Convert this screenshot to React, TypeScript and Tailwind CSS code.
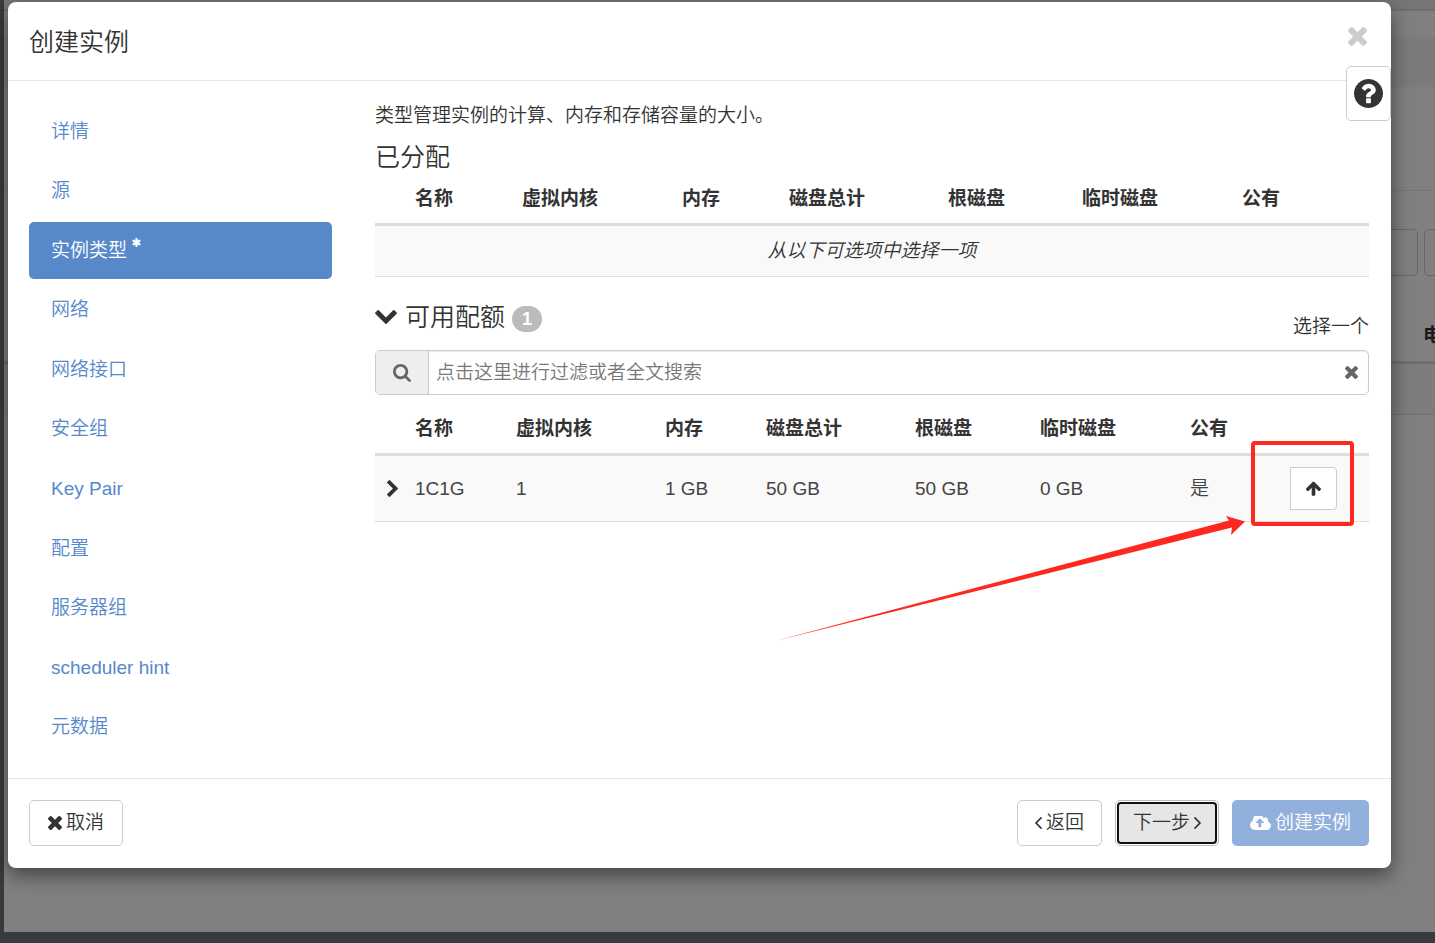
import React from "react";

type IconProps = { className: string };

const icon = (viewBox: string, d: string) =>
  function Icon({ className }: IconProps) {
    return (
      <svg viewBox={viewBox} className={className} fill="currentColor" aria-hidden="true">
        <path d={d} />
      </svg>
    );
  };

const Times = icon(
  "302 366 1188 1188",
  "M1490 1322q0 40-28 68l-136 136q-28 28-68 28t-68-28l-294-294-294 294q-28 28-68 28t-68-28l-136-136q-28-28-28-68t28-68l294-294-294-294q-28-28-28-68t28-68l136-136q28-28 68-28t68 28l294 294 294-294q28-28 68-28t68 28l136 136q28 28 28 68t-28 68l-294 294 294 294q28 28 28 68z",
);
const ChevronDown = icon(
  "90 533 1612 1035",
  "M1683 808l-742 741q-19 19-45 19t-45-19l-742-741q-19-19-19-45.5t19-45.5l166-165q19-19 45-19t45 19l531 531 531-531q19-19 45-19t45 19l166 165q19 19 19 45.5t-19 45.5z",
);
const ChevronRight = icon(
  "346 26 1036 1612",
  "M1363 877l-742 742q-19 19-45 19t-45-19l-166-166q-19-19-19-45t19-45l531-531-531-531q-19-19-19-45t19-45l166-166q19-19 45-19t45 19l742 742q19 19 19 45t-19 45z",
);
const Search = icon(
  "64 128 1664 1664",
  "M1216 832q0-185-131.5-316.5t-316.5-131.5-316.5 131.5-131.5 316.5 131.5 316.5 316.5 131.5 316.5-131.5 131.5-316.5zm512 832q0 52-38 90t-90 38q-54 0-90-38l-343-342q-179 124-399 124-143 0-273.5-55.5t-225-150-150-225-55.5-273.5 55.5-273.5 150-225 225-150 273.5-55.5 273.5 55.5 225 150 150 225 55.5 273.5q0 220-124 399l343 343q37 37 37 90z",
);
const ArrowUp = icon(
  "116 155 1560 1509",
  "M1675 971q0 51-37 90l-75 75q-38 38-91 38-54 0-90-38l-294-293v704q0 52-37.5 84.5t-90.5 32.5h-128q-53 0-90.5-32.5t-37.5-84.5v-704l-294 293q-36 38-90 38t-90-38l-75-75q-38-38-38-90 0-53 38-91l651-651q35-37 90-37 54 0 91 37l651 651q37 39 37 91z",
);
const QuestionCircle = icon(
  "128 128 1536 1536",
  "M1024 1376v-192q0-14-9-23t-23-9h-192q-14 0-23 9t-9 23v192q0 14 9 23t23 9h192q14 0 23-9t9-23zm256-672q0-88-55.5-163t-138.5-116-170-41q-243 0-371 213-15 24 8 42l132 100q7 6 19 6 16 0 25-12 53-68 86-92 34-24 86-24 48 0 85.5 26t37.5 59q0 38-20 61t-68 45q-63 28-115.5 86.5t-52.5 125.5v36q0 14 9 23t23 9h192q14 0 23-9t9-23q0-19 21.5-49.5t54.5-49.5q32-18 49-28.5t46-35 44.5-48 28-60.5 12.5-81zm384 192q0 209-103 385.5t-279.5 279.5-385.5 103-385.5-103-279.5-279.5-103-385.5 103-385.5 279.5-279.5 385.5-103 385.5 103 279.5 279.5 103 385.5z",
);
const CloudUpload = icon(
  "-64 256 1920 1280",
  "M1216 864q0-14-9-23l-352-352q-9-9-23-9t-23 9l-351 351q-10 12-10 24 0 14 9 23t23 9h224v352q0 13 9.5 22.5t22.5 9.5h192q13 0 22.5-9.5t9.5-22.5v-352h224q13 0 22.5-9.5t9.5-22.5zm640 288q0 159-112.5 271.5t-271.5 112.5h-1088q-185 0-316.5-131.5t-131.5-316.5q0-130 70-240t188-165q-2-30-2-43 0-212 150-362t362-150q156 0 285.5 87t188.5 231q71-62 166-62 106 0 181 75t75 181q0 76-41 138 130 31 213.5 135.5t83.5 238.5z",
);
const AngleLeft = icon(
  "621 461 582 998",
  "M1203 544q0 13-10 23l-393 393 393 393q10 10 10 23t-10 23l-50 50q-10 10-23 10t-23-10l-466-466q-10-10-10-23t10-23l466-466q10-10 23-10t23 10l50 50q10 10 10 23z",
);
const AngleRight = icon(
  "589 461 582 998",
  "M1171 960q0 13-10 23l-466 466q-10 10-23 10t-23-10l-50-50q-10-10-10-23t10-23l393-393-393-393q-10-10-10-23t10-23l50-50q10-10 23-10t23 10l466 466q10 10 10 23z",
);
const Asterisk = icon(
  "128 128 1536 1536",
  "M1546 1050q46 26 59.5 77.5t-12.5 97.5l-64 110q-26 46-77.5 59.5t-97.5-12.5l-266-153v307q0 52-38 90t-90 38h-128q-52 0-90-38t-38-90v-307l-266 153q-46 26-97.5 12.5t-77.5-59.5l-64-110q-26-46-12.5-97.5t59.5-77.5l266-154-266-154q-46-26-59.5-77.5t12.5-97.5l64-110q26-46 77.5-59.5t97.5 12.5l266 153v-307q0-52 38-90t90-38h128q52 0 90 38t38 90v307l266-153q46-26 97.5-12.5t77.5 59.5l64 110q26 46 12.5 97.5t-59.5 77.5l-266 154z",
);

const steps = [
  "详情",
  "源",
  "实例类型",
  "网络",
  "网络接口",
  "安全组",
  "Key Pair",
  "配置",
  "服务器组",
  "scheduler hint",
  "元数据",
];
const activeStep = "实例类型";

const headings = ["名称", "虚拟内核", "内存", "磁盘总计", "根磁盘", "临时磁盘", "公有"];
const flavor = ["1C1G", "1", "1 GB", "50 GB", "50 GB", "0 GB", "是"];

function TableHead({ trailing }: { trailing?: boolean }) {
  return (
    <thead>
      <tr className="border-b-3 border-[#ddd]">
        <td />
        {headings.map((h) => (
          <th key={h} scope="col" className="px-[11px] py-[11px] text-left font-bold leading-[27px]">
            {h}
          </th>
        ))}
        {trailing && <td />}
      </tr>
    </thead>
  );
}

function PageBehind() {
  return (
    <div className="absolute inset-0 flex flex-col overflow-hidden bg-[#808080]" aria-hidden="true">
      <div className="h-[11px] shrink-0 border-b-2 border-[#6e6e6e] bg-[#767676]" />
      <div className="h-[26px] shrink-0" />
      <div className="h-[50px] shrink-0 bg-[#7b7b7b]" />
      <div className="h-[104px] shrink-0 border-b border-[#777]" />
      <div className="flex shrink-0 justify-end gap-[6px] pt-[38px]">
        <div className="h-[47px] w-[240px] rounded-[5px] border border-[#666]" />
        <div className="-mr-[40px] h-[47px] w-[51px] rounded-[5px] border border-[#666]" />
      </div>
      <div className="mt-[44px] flex h-[44px] shrink-0 justify-end border-b-3 border-[#6f6f6f]">
        <span className="-mr-[7px] text-[19px] font-bold leading-[32px] text-[#1a1a1a]">电</span>
      </div>
      <div className="h-[51px] shrink-0 border-b border-[#6f6f6f] bg-[#7d7d7d]" />
    </div>
  );
}

export default function App() {
  return (
    <div className="relative flex min-h-screen flex-col border-b-11 border-l-4 border-[#373b3f] bg-[#808080] font-['Liberation_Sans','Noto_Sans_CJK_SC',sans-serif] text-[19px] leading-[26px] text-[#333]">
      <PageBehind />
      <div
        role="dialog"
        aria-labelledby="dialog-title"
        className="relative mt-[2px] mr-[44px] mb-[64px] ml-[4px] flex flex-1 flex-col rounded-[8px] bg-white shadow-[0_7px_20px_rgba(0,0,0,0.5)]"
      >
        <header className="flex items-start justify-between border-b border-[#e5e5e5] px-[21px] pt-[23px] pb-[21px]">
          <h1 id="dialog-title" className="text-[25px] font-[350] leading-[34px]">
            创建实例
          </h1>
          <button type="button" aria-label="关闭" className="mt-[2px] mr-[3px] text-[#ccc]">
            <Times className="size-[19px]" />
          </button>
        </header>
        <button
          type="button"
          aria-label="帮助"
          className="absolute top-[64px] right-0 flex h-[55px] w-[45px] items-center justify-center rounded-[5px] border border-[#ccc] bg-white"
        >
          <QuestionCircle className="size-[29px]" />
        </button>

        <div className="flex flex-1 gap-[43px] py-[22px] pr-[22px] pl-[21px]">
          <nav className="flex w-[303px] shrink-0 flex-col justify-between font-[350]">
            {steps.map((step) =>
              step === activeStep ? (
                <a
                  key={step}
                  href="#"
                  aria-current="step"
                  className="flex h-[57px] items-center gap-[5px] rounded-[5px] bg-[#5688ca] px-[22px] text-white"
                >
                  {step}
                  <Asterisk className="mb-[16px] size-[9px]" />
                </a>
              ) : (
                <a key={step} href="#" className="flex h-[57px] items-center rounded-[5px] px-[22px] text-[#5688ca]">
                  {step}
                </a>
              ),
            )}
          </nav>

          <main className="min-w-0 flex-1">
            <p className="font-[350]">类型管理实例的计算、内存和存储容量的大小。</p>
            <h2 className="mt-[12px] text-[25px] font-[350] leading-[33px]">已分配</h2>
            <table className="w-full table-fixed border-collapse">
              <colgroup>
                <col className="w-[29px]" />
                <col className="w-[107px]" />
                <col className="w-[160px]" />
                <col className="w-[107px]" />
                <col className="w-[159px]" />
                <col className="w-[134px]" />
                <col className="w-[160px]" />
                <col className="w-[138px]" />
              </colgroup>
              <TableHead />
              <tbody>
                <tr className="border-b border-[#ddd] bg-[#f9f9f9]">
                  <td colSpan={8} className="py-[12px] text-center font-[350] italic">
                    从以下可选项中选择一项
                  </td>
                </tr>
              </tbody>
            </table>

            <div className="mt-[23px] mb-[10px] flex h-[40px] justify-between">
              <div className="flex h-[34px] items-center gap-[7px]">
                <button type="button" className="flex items-center gap-[8px]">
                  <ChevronDown className="h-[14px] w-[22px]" />
                  <span className="text-[25px] font-[350] leading-[34px]">可用配额</span>
                </button>
                <span className="mt-[3px] flex h-[26px] w-[30px] items-center justify-center rounded-full bg-[#bbb] text-[18px] font-bold text-white">
                  1
                </span>
              </div>
              <span className="self-end font-[350]">选择一个</span>
            </div>

            <div className="flex h-[45px] items-stretch rounded-[5px] border border-[#ccc] shadow-[inset_0_1px_1px_rgba(0,0,0,0.08)]">
              <label
                htmlFor="filter"
                aria-label="搜索"
                className="flex w-[53px] items-center justify-center rounded-l-[4px] border-r border-[#ccc] bg-[#eee] text-[#666]"
              >
                <Search className="size-[18px]" />
              </label>
              <input
                id="filter"
                type="text"
                placeholder="点击这里进行过滤或者全文搜索"
                className="min-w-0 flex-1 bg-transparent px-[7px] font-[350] outline-none placeholder:text-[#777]"
              />
              <button type="button" aria-label="清除" className="mr-[10px] text-[#666]">
                <Times className="size-[13px]" />
              </button>
            </div>

            <table className="mt-[9px] w-full table-fixed border-collapse">
              <colgroup>
                <col className="w-[29px]" />
                <col className="w-[101px]" />
                <col className="w-[149px]" />
                <col className="w-[101px]" />
                <col className="w-[149px]" />
                <col className="w-[125px]" />
                <col className="w-[150px]" />
                <col className="w-[100px]" />
                <col className="w-[90px]" />
              </colgroup>
              <TableHead trailing />
              <tbody>
                <tr className="border-b border-[#ddd] bg-[#f9f9f9]">
                  <td>
                    <button type="button" aria-label="展开" className="block pl-[12px]">
                      <ChevronRight className="h-[17px] w-[11px]" />
                    </button>
                  </td>
                  {flavor.map((value, i) => (
                    <td key={headings[i]} className="px-[11px] font-[350] text-[#444]">
                      {value}
                    </td>
                  ))}
                  <td className="relative px-[11px] py-[11px]">
                    <button
                      type="button"
                      aria-label="分配"
                      className="flex h-[43px] w-[47px] items-center justify-center rounded-r-[4px] border border-[#ccc] bg-white"
                    >
                      <ArrowUp className="size-[15px]" />
                    </button>
                    <div className="pointer-events-none absolute -top-[15px] -left-[28px] h-[85px] w-[103px] rounded-[4px] border-4 border-[#ff2820]" />
                    <svg
                      viewBox="775 515 472 127"
                      className="pointer-events-none absolute top-[59px] right-[122px] h-[127px] w-[472px] max-w-none"
                      fill="#ff2820"
                      aria-hidden="true"
                    >
                      <path d="M775 641 L1229 520.5 L1226 516 L1245 521.5 L1231 535 L1232 527.5 Z" />
                    </svg>
                  </td>
                </tr>
              </tbody>
            </table>
          </main>
        </div>

        <footer className="flex justify-between border-t border-[#e5e5e5] pt-[21px] pr-[22px] pb-[22px] pl-[21px] font-[350]">
          <button type="button" className="flex h-[46px] items-center gap-[4px] rounded-[5px] border border-[#ccc] px-[18px]">
            <Times className="size-[14px]" />
            取消
          </button>
          <div className="flex gap-[13px]">
            <button type="button" className="flex h-[46px] items-center gap-[4px] rounded-[5px] border border-[#ccc] px-[17px]">
              <AngleLeft className="h-[12px] w-[7px]" />
              返回
            </button>
            <button type="button" className="rounded-[5px] border border-[#bbb] bg-white p-px">
              <span className="flex h-[42px] items-center gap-[4px] rounded-[4px] border-2 border-[#111] bg-[#e6e6e6] px-[14px]">
                下一步
                <AngleRight className="h-[12px] w-[7px]" />
              </span>
            </button>
            <button
              type="button"
              disabled
              className="flex h-[46px] items-center gap-[4px] rounded-[5px] bg-[#92b0dc] px-[18px] text-white"
            >
              <CloudUpload className="h-[14px] w-[21px]" />
              创建实例
            </button>
          </div>
        </footer>
      </div>
    </div>
  );
}
